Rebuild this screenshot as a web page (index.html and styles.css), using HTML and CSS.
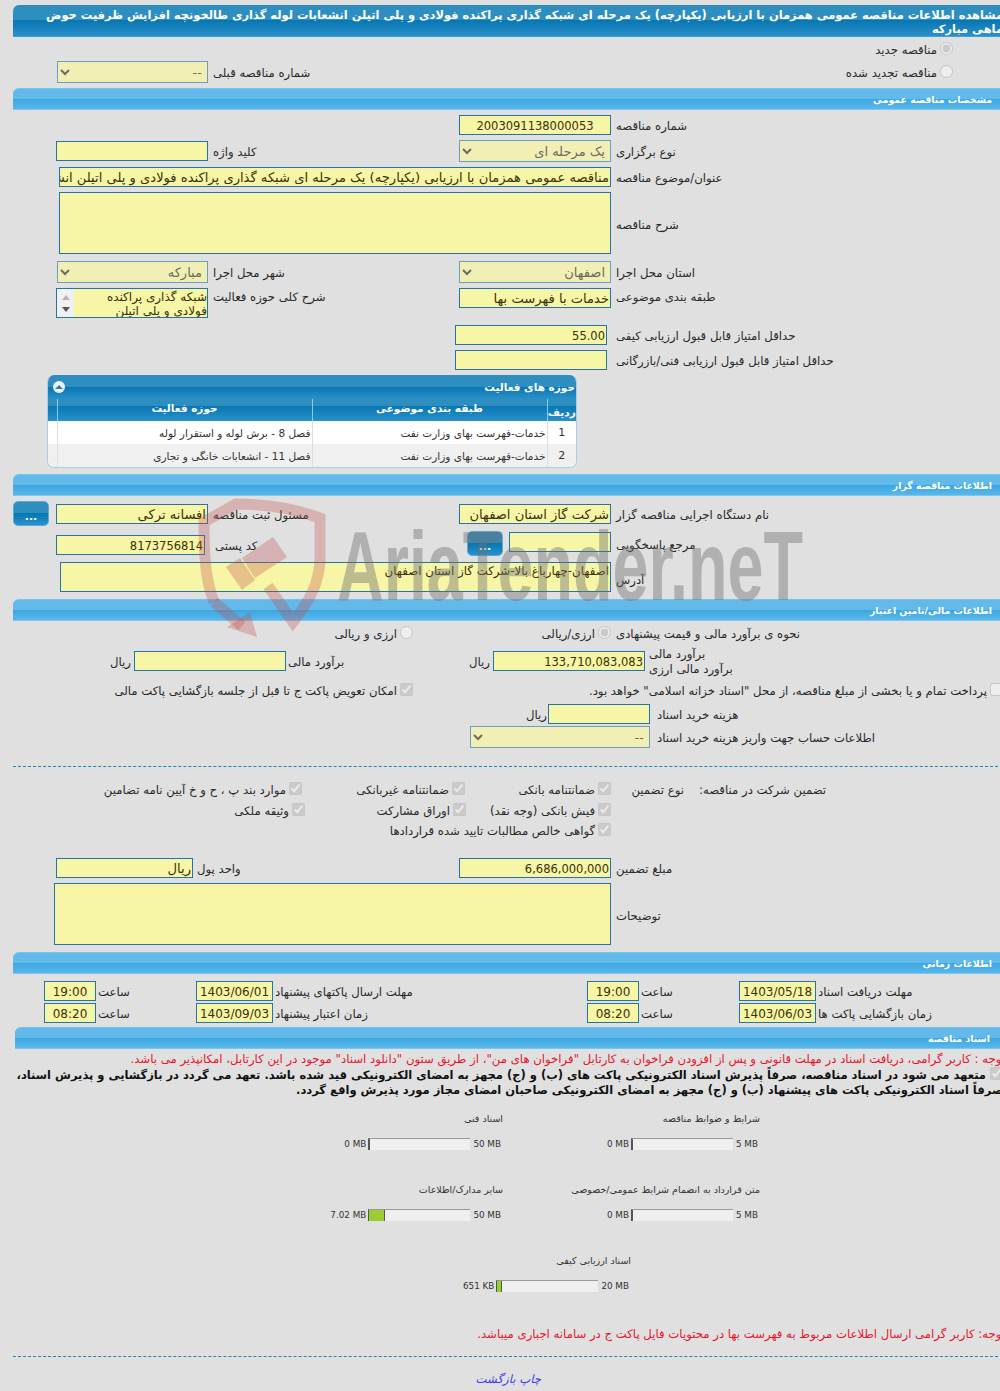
FILE: index.html
```html
<!DOCTYPE html>
<html lang="fa">
<head>
<meta charset="utf-8">
<title>مشاهده اطلاعات مناقصه</title>
<link rel="stylesheet" href="styles.css">
</head>
<body>
<main class="page">
  <h1 class="title-bar">مشاهده اطلاعات مناقصه عمومی همزمان با ارزیابی (یکپارچه) یک مرحله ای شبکه گذاری پراکنده فولادی و پلی اتیلن انشعابات لوله گذاری طالخونچه افزایش ظرفیت حوض ماهی مبارکه</h1>

  <div class="row h24">
    <label class="opt c4 opt-new"><input type="radio" disabled checked><span>مناقصه جدید</span></label>
  </div>
  <div class="row h22">
    <select class="select w151 c1" disabled><option>--</option></select>
    <span class="label">شماره مناقصه قبلی</span>
    <label class="opt c4 opt-new"><input type="radio" disabled><span>مناقصه تجدید شده</span></label>
  </div>

  <h2 class="section mt5">مشخصات مناقصه عمومی</h2>

  <div class="row h20 mt5">
    <div class="field w152 c3 num centered">2003091138000053</div>
    <span class="label">شماره مناقصه</span>
  </div>
  <div class="row h22 mt5">
    <div class="field w152 c1"></div>
    <span class="label">کلید واژه</span>
    <select class="select w152 c3" disabled><option>یک مرحله ای</option></select>
    <span class="label">نوع برگزاری</span>
  </div>
  <div class="row h20 mt5">
    <div class="field span3 w552">مناقصه عمومی همزمان با ارزیابی (یکپارچه) یک مرحله ای شبکه گذاری پراکنده فولادی و پلی اتیلن انشعابات لوله گذاری طالخونچه افزایش ظرفیت حوض ماهی مبارکه</div>
    <span class="label">عنوان/موضوع مناقصه</span>
  </div>
  <div class="row h62 mt5">
    <div class="field tall span3 w552"></div>
    <span class="label">شرح مناقصه</span>
  </div>
  <div class="row h22 mt7">
    <select class="select w151 c1" disabled><option>مبارکه</option></select>
    <span class="label">شهر محل اجرا</span>
    <select class="select w152 c3" disabled><option>اصفهان</option></select>
    <span class="label">استان محل اجرا</span>
  </div>
  <div class="row h30 mt5 top">
    <div class="scrollbox c1">
      <div class="scrollbox-text">شبکه گذاری پراکنده فولادی و پلی اتیلن</div>
      <div class="scrollbox-rail"><i class="arrow-up"></i><i class="arrow-down"></i></div>
    </div>
    <span class="label top-label">شرح کلی حوزه فعالیت</span>
    <div class="field w152 c3">خدمات با فهرست بها</div>
    <span class="label top-label">طبقه بندی موضوعی</span>
  </div>
  <div class="row h20 mt7">
    <div class="field w152 c3 inset4 num">55.00</div>
    <span class="label">حداقل امتیاز قابل قبول ارزیابی کیفی</span>
  </div>
  <div class="row h20 mt5">
    <div class="field w152 c3 inset4"></div>
    <span class="label">حداقل امتیاز قابل قبول ارزیابی فنی/بازرگانی</span>
  </div>

  <section class="activity">
    <div class="activity-head">
      <span>حوزه های فعالیت</span>
      <span class="collapse"><i></i></span>
    </div>
    <table class="activity-table">
      <colgroup><col class="col-a"><col class="col-b"><col class="col-c"><col class="col-d"></colgroup>
      <thead>
        <tr><th class="th-low">ردیف</th><th>طبقه بندی موضوعی</th><th>حوزه فعالیت</th><th></th></tr>
      </thead>
      <tbody>
        <tr><td class="num-cell">1</td><td>خدمات-فهرست بهای وزارت نفت</td><td>فصل 8 - برش لوله و استقرار لوله</td><td></td></tr>
        <tr><td class="num-cell">2</td><td>خدمات-فهرست بهای وزارت نفت</td><td>فصل 11 - انشعابات خانگی و تجاری</td><td></td></tr>
      </tbody>
    </table>
  </section>

  <h2 class="section mt6">اطلاعات مناقصه گزار</h2>

  <div class="row h25 mt5">
    <div class="c1 btn-cell">
      <button class="dots" type="button">...</button>
      <div class="field w152">افسانه ترکی</div>
    </div>
    <span class="label">مسئول ثبت مناقصه</span>
    <div class="field w152 c3">شرکت گاز استان اصفهان</div>
    <span class="label">نام دستگاه اجرایی مناقصه گزار</span>
  </div>
  <div class="row h25 mt5">
    <div class="field w149 c1 postal num">8173756814</div>
    <span class="label postal-label">کد پستی</span>
    <div class="c3 ref-cell">
      <button class="dots" type="button">...</button>
      <div class="field w102"></div>
    </div>
    <span class="label">مرجع پاسخگویی</span>
  </div>
  <div class="row h30 mt6">
    <div class="field tall address span3 w551">اصفهان-چهارباغ بالا-شرکت گاز استان اصفهان</div>
    <span class="label addr-label">آدرس</span>
  </div>

  <h2 class="section mt7">اطلاعات مالی/تامین اعتبار</h2>

  <div class="row h18 mt3">
    <label class="opt c2 opt-left"><input type="radio" disabled><span>ارزی و ریالی</span></label>
    <label class="opt c3"><input type="radio" disabled checked><span>ارزی/ریالی</span></label>
    <span class="label">نحوه ی برآورد مالی و قیمت پیشنهادی</span>
  </div>
  <div class="money-row mt9">
    <span class="unit c2">ریال</span>
    <div class="field w152 num"></div>
    <span class="label">برآورد مالی</span>
    <span class="unit">ریال</span>
    <div class="field w152 num">133,710,083,083</div>
    <span class="label two-line">برآورد مالی<br>برآورد مالی ارزی</span>
  </div>
  <div class="check-row mt10">
    <label class="opt"><input type="checkbox" disabled checked><span>امکان تعویض پاکت ج تا قبل از جلسه بازگشایی پاکت مالی</span></label>
    <label class="opt"><input type="checkbox" disabled><span>پرداخت تمام و یا بخشی از مبلغ مناقصه، از محل "اسناد خزانه اسلامی" خواهد بود.</span></label>
  </div>
  <div class="fee-row h20 mt5">
    <span class="unit">ریال</span>
    <div class="field w102"></div>
    <span class="label">هزینه خرید اسناد</span>
  </div>
  <div class="fee-row h22 mt2">
    <select class="select w180 span2" disabled><option>--</option></select>
    <span class="label">اطلاعات حساب جهت واریز هزینه خرید اسناد</span>
  </div>

  <hr class="dash mt18">

  <div class="guarantee h18 mt13">
    <label class="opt"><input type="checkbox" disabled checked><span>موارد بند پ ، ح و خ آیین نامه تضامین</span></label>
    <label class="opt"><input type="checkbox" disabled checked><span>ضمانتنامه غیربانکی</span></label>
    <label class="opt"><input type="checkbox" disabled checked><span>ضمانتنامه بانکی</span></label>
    <span class="g-type">نوع تضمین</span>
    <span class="label">تضمین شرکت در مناقصه:</span>
  </div>
  <div class="guarantee h18 mt3">
    <label class="opt shift3"><input type="checkbox" disabled checked><span>وثیقه ملکی</span></label>
    <label class="opt shift1"><input type="checkbox" disabled checked><span>اوراق مشارکت</span></label>
    <label class="opt"><input type="checkbox" disabled checked><span>فیش بانکی (وجه نقد)</span></label>
  </div>
  <div class="guarantee h18 mt2">
    <label class="opt c3"><input type="checkbox" disabled checked><span>گواهی خالص مطالبات تایید شده قراردادها</span></label>
  </div>

  <div class="row h20 mt19">
    <div class="field w137 c1 unit-field">ریال</div>
    <span class="label unit-label">واحد پول</span>
    <div class="field w152 c3 num">6,686,000,000</div>
    <span class="label">مبلغ تضمین</span>
  </div>
  <div class="row h62 mt5">
    <div class="field tall span3 w557"></div>
    <span class="label">توضیحات</span>
  </div>

  <h2 class="section mt7">اطلاعات زمانی</h2>

  <div class="times h20 mt7">
    <div class="field time c2">19:00</div><span class="label">ساعت</span>
    <div class="field date">1403/06/01</div><span class="label">مهلت ارسال پاکتهای پیشنهاد</span>
    <div class="field time">19:00</div><span class="label">ساعت</span>
    <div class="field date">1403/05/18</div><span class="label">مهلت دریافت اسناد</span>
  </div>
  <div class="times h20 mt2">
    <div class="field time c2">08:20</div><span class="label">ساعت</span>
    <div class="field date">1403/09/03</div><span class="label">زمان اعتبار پیشنهاد</span>
    <div class="field time">08:20</div><span class="label">ساعت</span>
    <div class="field date">1403/06/03</div><span class="label">زمان بازگشایی پاکت ها</span>
  </div>

  <h2 class="section section-docs mt4">اسناد مناقصه</h2>

  <p class="note-red mt3">توجه : کاربر گرامی، دریافت اسناد در مهلت قانونی و پس از افزودن فراخوان به کارتابل "فراخوان های من"، از طریق ستون "دانلود اسناد" موجود در این کارتابل، امکانپذیر می باشد.</p>
  <p class="note-bold mt1"><input type="checkbox" disabled checked>متعهد می شود در اسناد مناقصه، صرفاً پذیرش اسناد الکترونیکی پاکت های (ب) و (ج) مجهز به امضای الکترونیکی قید شده باشد. تعهد می گردد در بازگشایی و پذیرش اسناد، صرفاً اسناد الکترونیکی پاکت های پیشنهاد (ب) و (ج) مجهز به امضای الکترونیکی صاحبان امضای مجاز مورد پذیرش واقع گردد.</p>

  <div class="docs mt14">
    <div class="doc doc-left">
      <div class="doc-name">اسناد فنی</div>
      <div class="doc-bar"><span>0 MB</span><div class="meter"><div class="meter-fill"></div></div><span>50 MB</span></div>
    </div>
    <div class="doc doc-right">
      <div class="doc-name">شرایط و ضوابط مناقصه</div>
      <div class="doc-bar"><span>0 MB</span><div class="meter"><div class="meter-fill"></div></div><span>5 MB</span></div>
    </div>
  </div>
  <div class="docs">
    <div class="doc doc-left">
      <div class="doc-name">سایر مدارک/اطلاعات</div>
      <div class="doc-bar"><span>7.02 MB</span><div class="meter"><div class="meter-fill" style="width:14%"></div></div><span>50 MB</span></div>
    </div>
    <div class="doc doc-right">
      <div class="doc-name">متن قرارداد به انضمام شرایط عمومی/خصوصی</div>
      <div class="doc-bar"><span>0 MB</span><div class="meter"><div class="meter-fill"></div></div><span>5 MB</span></div>
    </div>
  </div>
  <div class="docs">
    <div class="doc doc-center">
      <div class="doc-name">اسناد ارزیابی کیفی</div>
      <div class="doc-bar"><span>651 KB</span><div class="meter"><div class="meter-fill" style="width:3.2%"></div></div><span>20 MB</span></div>
    </div>
  </div>

  <p class="note-red mt2">توجه: کاربر گرامی ارسال اطلاعات مربوط به فهرست بها در محتویات فایل پاکت ج در سامانه اجباری میباشد.</p>

  <hr class="dash mt15">

  <nav class="links"><a href="#">چاپ</a> <a href="#">بازگشت</a></nav>
</main>

<div class="watermark" aria-hidden="true">
  <svg class="wm-shield" viewBox="0 0 130 145" width="130" height="145">
    <path class="wm-line" d="M16 104 C8 84 6 60 6 24 L38 6 C70 6 100 12 122 20 L122 60 C122 85 110 105 95 124 L70 88"/>
    <path class="wm-line" d="M16 104 L44 128"/>
    <polygon class="wm-solid" points="52,114 29,129 59,139"/>
    <polygon class="wm-solid" points="44,60 75,39 89,59 57,80"/>
    <polygon class="wm-solid" points="28,69 42,60 57,82 44,92"/>
  </svg>
  <span class="wm-text">AriaTender.neT</span>
</div>
</body>
</html>
```
FILE: styles.css
```css
* { box-sizing: border-box; }
html, body { margin: 0; height: 1391px; overflow: hidden; background: #e0e0e0; }
body { position: relative; padding: 5px 0 0 13px; font: 11.7px/14px "DejaVu Sans", sans-serif; color: #222; }
.page { width: 995px; }
h1, h2, p, hr { margin: 0; }

.mt1 { margin-top: 1px; } .mt2 { margin-top: 2px; } .mt3 { margin-top: 3px; } .mt4 { margin-top: 4px; }
.mt5 { margin-top: 5px; } .mt6 { margin-top: 6px; } .mt7 { margin-top: 7px; }
.mt9 { margin-top: 9px; } .mt10 { margin-top: 10px; } .mt13 { margin-top: 13px; } .mt14 { margin-top: 14px; }
.mt15 { margin-top: 15px; } .mt18 { margin-top: 18px; } .mt19 { margin-top: 19px; }
.h18 { height: 18px; } .h20 { height: 20px; } .h22 { height: 22px; } .h24 { height: 24px; }
.h25 { height: 25px; } .h30 { height: 30px; } .h62 { height: 62px; }

.title-bar {
  height: 32px; padding: 3px 5px 0 20px; direction: rtl; overflow: hidden;
  font-size: 11.45px; line-height: 14px; font-weight: bold; color: #fff; text-align: right;
  border-radius: 6px 0 0 0; border-bottom: 1px solid #3aa0dc;
  background: linear-gradient(#2f8ec0 0, #2f8ec0 50%, #0777b3 50%, #2b90c9 100%);
}
.section {
  height: 22px; padding: 3px 16px 0 0; direction: rtl; text-align: right;
  font-size: 9.4px; line-height: 15px; font-weight: bold; color: #fff;
  border-radius: 6px 0 0 0; border-top: 1px solid #6cc6ee; border-bottom: 1px solid #7cc6ee;
  background: linear-gradient(#62b9ea 0, #62b9ea 50%, #3aa7e1 50%, #5ab7ea 100%);
}
.section-docs { margin-left: 2px; padding-right: 18px; }

.row { display: grid; grid-template-columns: 195px 232px 171px 397px; align-items: center; }
.row.top { align-items: start; }
.c1 { grid-column: 1; } .c2 { grid-column: 2; } .c3 { grid-column: 3; } .c4 { grid-column: 4; }
.span3 { grid-column: 1 / span 3; justify-self: end; }
.span2 { grid-column: 1 / span 2; justify-self: end; }

.label { direction: rtl; text-align: left; padding: 2px 0 0 5px; white-space: nowrap; color: #2a2a2a; }
.h62 .label { padding-top: 4px; }

.field {
  height: 20px; border: 1px solid #2274ab; background: #f7f5a6; direction: rtl;
  font-size: 13.1px; line-height: 18px; padding: 1px 1px 0; white-space: nowrap; overflow: hidden;
  color: #3a3208; justify-self: end;
}
.num { font-size: 11.5px; line-height: 19px; text-align: right; }
.centered { text-align: center; }
.field.tall { height: 100%; white-space: normal; line-height: 14px; font-size: 11.8px; }
.w102 { width: 102px; } .w137 { width: 137px; } .w149 { width: 149px; } .w151 { width: 151px; }
.w152 { width: 152px; } .w180 { width: 180px; } .w551 { width: 551px; } .w552 { width: 552px; } .w557 { width: 557px; }
.inset4 { margin-right: 4px; }
.postal { margin: 3px 3px 0 0; height: 20px; }
.postal-label { padding-left: 7px; margin-top: 3px; }
.address { padding-top: 1px; }
.addr-label { padding-top: 6px; }
.unit-field { margin-right: 15px; }
.unit-label { margin-left: -15px; padding-left: 4px; }

.select {
  height: 22px; border: 1px solid #6a9fc2; background-color: #f2efb4; direction: rtl;
  font: 13px "DejaVu Sans", sans-serif; color: #6c6c60; opacity: 1; padding: 0 1px 0 0; justify-self: end; border-radius: 0;
}
.opt { display: flex; direction: rtl; align-items: center; justify-self: end; white-space: nowrap; color: #2a2a2a; }
.opt span { padding-top: 2px; }
.opt input { width: 13px; height: 13px; margin: 0 0 2px 3px; flex: none; }
.opt-new { margin-right: 55px; }
.opt-left { margin-right: 27px; }

.scrollbox { display: flex; width: 152px; height: 30px; justify-self: end; border: 1px solid #2274ab; background: #f7f5a6; overflow: hidden; direction: rtl; }
.scrollbox-text { flex: 1; padding: 1px 0 0 12px; font-size: 12px; line-height: 14px; color: #3a3208; overflow: hidden; }
.scrollbox-rail { width: 17px; background: #f1f1f1; display: flex; flex-direction: column; align-items: center; justify-content: space-between; padding: 6px 0 5px; }
.arrow-up { border: 4px solid transparent; border-top: 0; border-bottom: 5px solid #b4b4b4; }
.arrow-down { border: 4px solid transparent; border-bottom: 0; border-top: 5px solid #555; }

.activity { margin: 5px 0 0 34px; width: 530px; height: 93px; border: 1px solid #a9cfe6; border-top: 0; border-radius: 7px; overflow: hidden; background: #fff; }
.activity-head {
  height: 24px; display: flex; direction: rtl; justify-content: space-between; align-items: center; padding: 0 1px 0 5px;
  font-size: 10.5px; font-weight: bold; color: #fff;
  background: linear-gradient(#2f8ec0 0, #2f8ec0 50%, #0777b3 50%, #2b90c9 100%);
}
.collapse { width: 12px; height: 12px; border-radius: 50%; background: #eaf3f8; display: flex; align-items: center; justify-content: center; }
.collapse i { border: 4px solid transparent; border-top: 0; border-bottom: 4px solid #1f7fb5; }
.activity-table { width: 528px; table-layout: fixed; border-collapse: collapse; direction: rtl; font-size: 10.5px; }
.col-a { width: 29px; } .col-b { width: 235px; } .col-c { width: 255px; } .col-d { width: 9px; }
.activity-table th {
  height: 22px; padding: 0 0 5px; font-size: 10.5px; font-weight: bold; color: #fff; border-left: 1px solid #83cdf2;
  background: linear-gradient(#2f8ec0 0, #2f8ec0 33%, #0777b3 34%, #2b90c9 100%);
}
.activity-table th.th-low { padding: 3px 0 0; }
.activity-table th:last-child { border-left: 0; }
.activity-table td { height: 23px; padding: 0 1px; color: #333; border-left: 1px solid #dedede; text-align: right; white-space: nowrap; }
.activity-table td:last-child { border-left: 0; }
.activity-table td.num-cell { text-align: center; font-size: 11px; }
.activity-table tbody tr:nth-child(2) td { background: #f0f0f0; height: 24px; }

.btn-cell { display: flex; justify-content: space-between; align-items: center; }
.btn-cell .field { margin-top: 1px; }
.ref-cell { display: flex; justify-content: flex-end; gap: 6px; align-items: flex-start; }
.ref-cell .field { margin-top: 1px; }
.dots {
  width: 36px; height: 25px; padding: 6px 0 0; border: 1px solid #5aa9d6; border-radius: 5px; color: #fff; font: bold 11px/14px "DejaVu Sans", sans-serif;
  background: linear-gradient(#2f8ec0 0, #2f8ec0 50%, #0777b3 50%, #2b90c9 100%);
}

.money-row { display: grid; height: 20px; align-items: center; grid-template-rows: 20px; grid-template-columns: 98px 23px 152px 184px 23px 152px 1fr; }
.unit { direction: rtl; text-align: left; justify-self: end; padding: 2px 3px 0 0; color: #2a2a2a; }
.money-row .label { padding-left: 2px; }
.money-row .two-line { padding-left: 4px; line-height: 15px; }
.check-row { display: grid; height: 18px; grid-template-columns: 400px 590px; align-items: center; }
.fee-row { display: grid; grid-template-columns: 535px 102px 1fr; align-items: center; }
.fee-row .label { padding-left: 7px; }
.fee-row .unit { padding-right: 1px; }
.dash { border: 0; border-top: 1px dashed #1f84bc; height: 0; width: 985px; }

.guarantee { display: grid; grid-template-columns: 289px 163px 146px 87px 1fr; align-items: center; }
.g-type { direction: rtl; justify-self: end; white-space: nowrap; color: #2a2a2a; margin-right: 14px; padding-top: 2px; }
.guarantee .label { padding-left: 1px; }
.shift3 { margin-right: -3px; } .shift1 { margin-right: -1px; }

.times { display: grid; grid-template-columns: 31px 52px 100px 77px 314px 52px 100px 77px 1fr; align-items: center; }
.times .label { padding-left: 2px; }
.field.time, .field.date { font-size: 12px; text-align: center; padding: 1px 0 0; justify-self: stretch; }

.note-red { direction: rtl; color: #e8142c; font-size: 11.7px; line-height: 14px; white-space: nowrap; text-align: right; padding-right: 3px; }
.note-bold { direction: rtl; margin-left: 3px; padding-right: 5px; font-size: 11.5px; line-height: 15px; font-weight: bold; color: #111; }
.note-bold input { width: 13px; height: 13px; margin: 0 0 0 4px; vertical-align: -1px; }

.docs { display: flex; height: 71px; }
.doc { width: 200px; }
.doc-left { margin-left: 290px; }
.doc-right { margin-left: 57px; }
.doc-center { margin-left: 418px; }
.doc-name { direction: rtl; text-align: right; font-size: 9.5px; line-height: 14px; color: #333; white-space: nowrap; }
.doc-bar { display: flex; justify-content: flex-end; align-items: center; gap: 2px; margin-top: 12px; height: 12px; padding-right: 2px; font-size: 8.8px; color: #333; white-space: nowrap; }
.meter { width: 102px; height: 12px; background: #efefef; border-top: 1px solid #999; border-left: 1px solid #555; margin-right: 1px; }
.meter-fill { height: 100%; width: 0; background: #9acd32; box-sizing: content-box; border-right: 1px solid #555; }

.links { margin-top: 14px; direction: rtl; font-style: italic; margin-left: 463px; width: 65px; line-height: 16px; white-space: nowrap; }
.links a { color: #3a3af0; text-decoration: none; }

.watermark { position: absolute; left: 198px; top: 498px; width: 620px; height: 145px; pointer-events: none; }
.wm-shield { position: absolute; left: 0; top: 0; }
.wm-line { fill: none; stroke: rgba(196, 72, 72, .3); stroke-width: 11; }
.wm-solid { fill: rgba(196, 72, 72, .3); }
.wm-text {
  position: absolute; left: 139px; top: 13px; font: bold 98px/110px "Liberation Sans", sans-serif; color: rgba(110, 110, 110, .42);
  white-space: nowrap; transform-origin: 0 0; transform: scaleX(.66);
}
```
